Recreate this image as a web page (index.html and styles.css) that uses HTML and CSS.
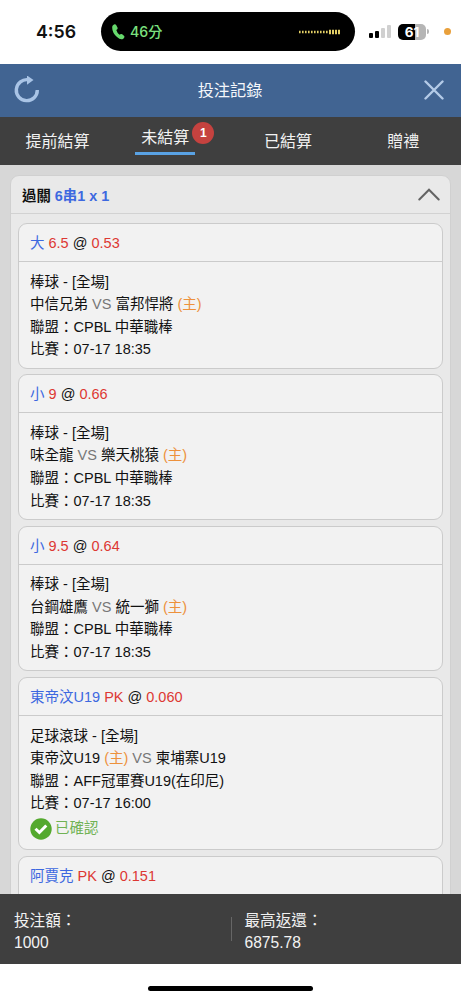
FILE: index.html
```
<!DOCTYPE html>
<html lang="zh-Hant">
<head>
    <meta charset="UTF-8">
    <meta name="viewport" content="width=device-width, initial-scale=1.0">
    <title>投注記錄</title>
    <link rel="stylesheet" href="styles.css">
</head>
<body>
    <div class="status">
        <span class="clock">4:56</span>
        <div class="island">
            <svg class="phone" width="13" height="16" viewBox="0 0 13 16">
                <path d="M1 1.3 Q3 -.5 4.3 1.2 L5.6 3.8 Q6 5 4.3 6.1 Q5 8.8 7.5 10.7 Q9 9.4 10.2 10.3 L12.2 12 Q13 13.2 11.3 14.7 Q8.8 16.5 5 13.1 Q0 8.5 .2 3.3 Q.2 2 1 1.3Z" fill="#66d86c"/>
            </svg>
            <span class="mins">46分</span>
            <svg class="wave" width="43" height="6" viewBox="0 0 43 6">
                <path d="M1 3H30" stroke="#e3cf66" stroke-width="2.4" stroke-dasharray="1.6 1.4"/>
                <path d="M31 3H43" stroke="#e3cf66" stroke-width="4.5" stroke-dasharray="2 1"/>
            </svg>
        </div>
        <svg class="signal" width="22" height="15" viewBox="0 0 22 15">
            <rect x="0" y="9" width="4" height="5" rx="1"/>
            <rect x="6" y="7" width="4" height="7" rx="1"/>
            <rect x="12" y="4" width="4" height="10" rx="1" fill="#d0d0d0"/>
            <rect x="18" y="1" width="4" height="13" rx="1" fill="#d0d0d0"/>
        </svg>
        <div class="battery"><span>61</span></div>
        <i class="battery-tip"></i>
        <i class="mic-dot"></i>
    </div>

    <div class="title-bar">
        <svg width="26" height="28" viewBox="0 0 26 28">
            <path d="M23.3 14A10.5 10.5 0 1 1 14.5 3.8" fill="none" stroke="#a9c4e6" stroke-width="3.4"/>
            <path d="M13 -.5L19.5 4L13 8.7Z" fill="#a9c4e6"/>
        </svg>
        <h1>投注記錄</h1>
        <svg width="20" height="20" viewBox="0 0 20 20">
            <path d="M1.5 1.5L18.5 18.5M18.5 1.5L1.5 18.5" stroke="#b4cbe8" stroke-width="2.4" stroke-linecap="round"/>
        </svg>
    </div>

    <div class="tabs">
        <div class="tab">提前結算</div>
        <div class="tab active"><span class="tab-label">未結算<b class="badge">1</b></span></div>
        <div class="tab">已結算</div>
        <div class="tab">贈禮</div>
    </div>

    <div class="content">
        <div class="panel">
            <div class="panel-head">
                <span>過關 <span class="blue">6串1 x 1</span></span>
                <svg width="22" height="13" viewBox="0 0 22 13">
                    <path d="M1.3 11.5L11 1.7L20.7 11.5" fill="none" stroke="#636363" stroke-width="2" stroke-linecap="round"/>
                </svg>
            </div>
            <div class="list">
                <div class="card">
                    <div class="card-head"><span class="blue">大</span> <span class="red">6.5</span> @ <span class="red">0.53</span></div>
                    <div class="card-body">
                        <p>棒球 - [全場]</p>
                        <p>中信兄弟 <span class="gray">VS</span> 富邦悍將 <span class="orange">(主)</span></p>
                        <p>聯盟：CPBL 中華職棒</p>
                        <p>比賽：07-17 18:35</p>
                    </div>
                </div>
                <div class="card">
                    <div class="card-head"><span class="blue">小</span> <span class="red">9</span> @ <span class="red">0.66</span></div>
                    <div class="card-body">
                        <p>棒球 - [全場]</p>
                        <p>味全龍 <span class="gray">VS</span> 樂天桃猿 <span class="orange">(主)</span></p>
                        <p>聯盟：CPBL 中華職棒</p>
                        <p>比賽：07-17 18:35</p>
                    </div>
                </div>
                <div class="card">
                    <div class="card-head"><span class="blue">小</span> <span class="red">9.5</span> @ <span class="red">0.64</span></div>
                    <div class="card-body">
                        <p>棒球 - [全場]</p>
                        <p>台鋼雄鷹 <span class="gray">VS</span> 統一獅 <span class="orange">(主)</span></p>
                        <p>聯盟：CPBL 中華職棒</p>
                        <p>比賽：07-17 18:35</p>
                    </div>
                </div>
                <div class="card">
                    <div class="card-head"><span class="blue">東帝汶U19</span> <span class="red">PK</span> @ <span class="red">0.060</span></div>
                    <div class="card-body">
                        <p>足球滾球 - [全場]</p>
                        <p>東帝汶U19 <span class="orange">(主)</span> <span class="gray">VS</span> 柬埔寨U19</p>
                        <p>聯盟：AFF冠軍賽U19(在印尼)</p>
                        <p>比賽：07-17 16:00</p>
                        <div class="confirmed">
                            <svg width="22" height="22" viewBox="0 0 22 22">
                                <circle cx="11" cy="11" r="10.7" fill="#54a92e"/>
                                <path d="M5.5 10.7L9.4 14.5L16.3 7.5" fill="none" stroke="#fff" stroke-width="3"/>
                            </svg>
                            <span>已確認</span>
                        </div>
                    </div>
                </div>
                <div class="card">
                    <div class="card-head"><span class="blue">阿賈克</span> <span class="red">PK</span> @ <span class="red">0.151</span></div>
                    <div class="card-body"></div>
                </div>
            </div>
        </div>
    </div>

    <div class="totals">
        <div class="total">投注額：<br>1000</div>
        <div class="total">最高返還：<br>6875.78</div>
    </div>
    <div class="home"><i></i></div>
</body>
</html>
```
FILE: styles.css
```
* {
    box-sizing: border-box;
}

body {
    margin: 0;
    height: 1000px;
    display: flex;
    flex-direction: column;
    overflow: hidden;
    background-color: #fff;
    color: #111;
    font-family: "Liberation Sans", "Noto Sans CJK TC", sans-serif;
    font-size: 14.5px;
}

h1, p {
    margin: 0;
    font-weight: normal;
}

svg {
    display: block;
    flex: none;
}

/* status bar */
.status {
    flex: none;
    height: 63.5px;
    display: flex;
    align-items: center;
}

.clock {
    width: 101px;
    padding-left: 36px;
    font-family: Inter, sans-serif;
    font-size: 17.8px;
    font-weight: 600;
}

.island {
    width: 254px;
    height: 39px;
    display: flex;
    align-items: center;
    padding: 0 14px 0 11px;
    border-radius: 20px;
    background-color: #000;
}

.mins {
    margin-left: 5px;
    color: #7be07f;
    font-family: Inter, "Noto Sans CJK TC", sans-serif;
    font-size: 14.2px;
    font-weight: 500;
    line-height: 20px;
}

.wave {
    margin-left: auto;
}

.signal {
    margin-left: 14px;
}

.battery {
    width: 28px;
    height: 16px;
    margin-left: 7px;
    border-radius: 5px;
    background: linear-gradient(90deg, #000 61%, #b5b5b5 61%);
    color: #fff;
    font: bold 13.5px/16px Inter, sans-serif;
    text-align: center;
}

.battery-tip {
    width: 2px;
    height: 5px;
    margin-left: 1px;
    border-radius: 0 2px 2px 0;
    background-color: #b5b5b5;
}

.mic-dot {
    width: 7px;
    height: 7px;
    margin-left: 15px;
    border-radius: 50%;
    background-color: #e9a03b;
}

/* title bar */
.title-bar {
    flex: none;
    height: 53.5px;
    display: flex;
    align-items: center;
    justify-content: space-between;
    padding: 0 17px 0 14px;
    background-color: #416492;
    color: #f4f7fb;
}

.title-bar h1 {
    margin-right: 4px;
    padding-bottom: 2px;
    font-size: 16.2px;
}

/* tabs */
.tabs {
    flex: none;
    height: 48px;
    display: flex;
    background-color: #3f3f3f;
    color: #f2f2f2;
    font-size: 16px;
}

.tab {
    width: 25%;
    display: flex;
    align-items: center;
    justify-content: center;
    padding-bottom: 2px;
}

.tab.active {
    align-items: flex-start;
    padding: 8px 15px 0 0;
}

.tab-label {
    position: relative;
    height: 30px;
    padding: 0 6px;
    border-bottom: 3px solid #59a2e4;
    line-height: 25px;
}

.badge {
    position: absolute;
    top: -3px;
    right: -19px;
    width: 22px;
    height: 22px;
    border-radius: 50%;
    background-color: #c5423f;
    color: #fff;
    font-size: 12px;
    line-height: 22px;
    text-align: center;
}

/* bet list */
.content {
    flex: 1;
    min-height: 0;
    overflow: hidden;
    padding: 10px 10px 0;
    background-color: #d7d7d7;
}

.panel {
    border: 1px solid #d0d0d0;
    border-radius: 9px;
    background-color: #e9e9e9;
}

.panel-head {
    height: 38px;
    display: flex;
    align-items: center;
    justify-content: space-between;
    padding: 0 10px 0 11px;
    border-bottom: 1px solid #d2d2d2;
    font-weight: bold;
    font-size: 14.4px;
}

.list {
    display: flex;
    flex-direction: column;
    gap: 5.8px;
    padding: 9px 7px;
}

.card {
    border: 1px solid #cbcbcb;
    border-radius: 9px;
    background-color: #f2f2f2;
}

.card-head {
    height: 38px;
    padding: 0 11px;
    border-bottom: 1px solid #cbcbcb;
    line-height: 38px;
}

.card-body {
    padding: 8.5px 11px 6.7px;
    line-height: 22.6px;
}

.card-body p {
    height: 22.6px;
}

.confirmed {
    height: 27.6px;
    display: flex;
    align-items: center;
    gap: 3px;
    color: #70b254;
}

.blue {
    color: #3d68e0;
}

.red {
    color: #dd3833;
}

.orange {
    color: #ed913c;
}

.gray {
    color: #777;
}

/* totals */
.totals {
    flex: none;
    height: 69.5px;
    display: flex;
    align-items: center;
    padding-top: 7px;
    background-color: #3f3f3f;
    color: #f2f2f2;
    font-size: 15.6px;
    line-height: 22px;
}

.total {
    width: 50%;
    padding-left: 14px;
}

.total + .total {
    position: relative;
}

.total + .total::before {
    content: "";
    position: absolute;
    left: 0;
    top: 7px;
    width: 1px;
    height: 24px;
    background-color: #666;
}

.home {
    flex: none;
    height: 36.5px;
    padding-top: 22.5px;
}

.home i {
    display: block;
    width: 165px;
    height: 5px;
    margin: 0 auto;
    border-radius: 3px;
    background-color: #000;
}
```
